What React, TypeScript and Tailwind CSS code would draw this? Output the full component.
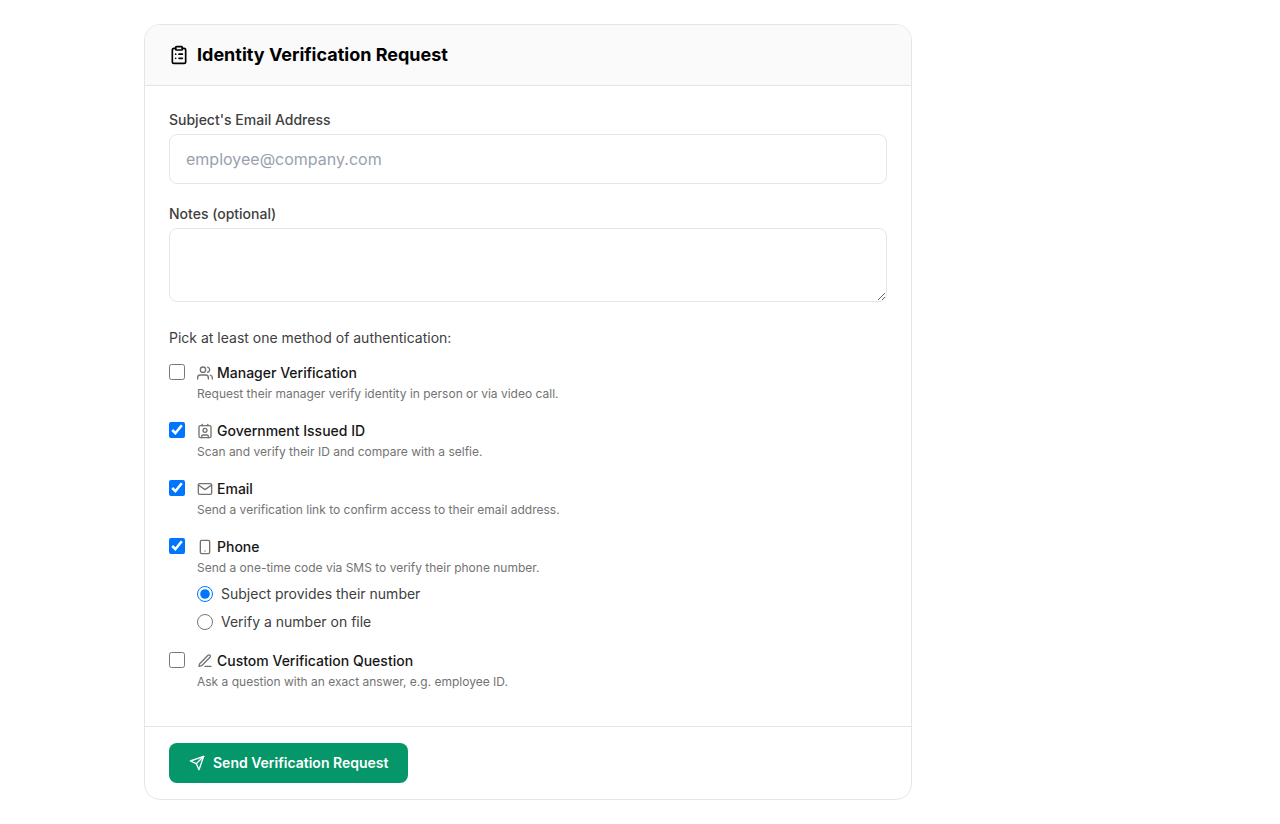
import { useState } from "react";
import type { ReactNode } from "react";
import { ClipboardList, Contact } from "lucide-react";
import { FiEdit3, FiMail, FiSend, FiSmartphone, FiUsers } from "react-icons/fi";

interface MethodProps {
  id: string;
  icon: ReactNode;
  title: string;
  description: string;
  defaultChecked?: boolean;
  children?: ReactNode;
}

function Method({ id, icon, title, description, defaultChecked, children }: MethodProps) {
  return (
    <div className="flex items-start gap-3">
      <input
        id={id}
        type="checkbox"
        defaultChecked={defaultChecked}
        aria-describedby={`${id}-description`}
        className="mt-0.5 size-4 shrink-0 accent-[#0075ff]"
      />
      <div>
        <label htmlFor={id} className="flex items-center gap-1 text-sm leading-[22px] font-medium text-neutral-900">
          <span className="text-neutral-500">{icon}</span>
          {title}
        </label>
        <p id={`${id}-description`} className="text-xs leading-5 text-neutral-500">
          {description}
        </p>
        {children}
      </div>
    </div>
  );
}

export default function App() {
  const [phoneSource, setPhoneSource] = useState("subject");

  return (
    <main className="mx-auto max-w-5xl p-4 pt-6 font-['Inter',sans-serif] text-neutral-700">
      <form
        onSubmit={(e) => e.preventDefault()}
        className="max-w-3xl overflow-hidden rounded-2xl border border-neutral-200 bg-white"
      >
        <header className="flex items-center gap-2 border-b border-neutral-200 bg-neutral-50 px-6 py-4">
          <ClipboardList className="size-5 text-black" />
          <h1 className="text-lg font-bold text-black">Identity Verification Request</h1>
        </header>

        <div className="px-6 pt-6 pb-[34px]">
          <div className="mb-5">
            <label htmlFor="email" className="mb-1 block text-sm font-medium">
              Subject's Email Address
            </label>
            <input
              id="email"
              type="email"
              placeholder="employee@company.com"
              className="block w-full rounded-lg border border-neutral-200 px-4 py-3 text-base placeholder:text-gray-400"
            />
          </div>

          <div className="mb-6">
            <label htmlFor="notes" className="mb-1 block text-sm font-medium">
              Notes (optional)
            </label>
            <textarea
              id="notes"
              rows={2}
              className="block w-full rounded-lg border border-neutral-200 px-4 py-3 text-base"
            />
          </div>

          {/* Authentication methods */}
          <fieldset>
            <legend className="mb-3 text-sm leading-6">Pick at least one method of authentication:</legend>
            <div className="space-y-4">
              <Method
                id="manager"
                icon={<FiUsers className="size-4" />}
                title="Manager Verification"
                description="Request their manager verify identity in person or via video call."
              />
              <Method
                id="government-id"
                icon={<Contact className="size-4" />}
                title="Government Issued ID"
                description="Scan and verify their ID and compare with a selfie."
                defaultChecked
              />
              <Method
                id="email-link"
                icon={<FiMail className="size-4" />}
                title="Email"
                description="Send a verification link to confirm access to their email address."
                defaultChecked
              />
              <Method
                id="phone"
                icon={<FiSmartphone className="size-4" />}
                title="Phone"
                description="Send a one-time code via SMS to verify their phone number."
                defaultChecked
              >
                <div className="mt-1.5 mb-0.5 space-y-2">
                  <label className="flex items-center gap-2 text-sm">
                    <input
                      type="radio"
                      name="phone-source"
                      value="subject"
                      checked={phoneSource === "subject"}
                      onChange={(e) => setPhoneSource(e.target.value)}
                      className="size-4 accent-[#0075ff]"
                    />
                    Subject provides their number
                  </label>
                  <label className="flex items-center gap-2 text-sm">
                    <input
                      type="radio"
                      name="phone-source"
                      value="file"
                      checked={phoneSource === "file"}
                      onChange={(e) => setPhoneSource(e.target.value)}
                      className="size-4 accent-[#0075ff]"
                    />
                    Verify a number on file
                  </label>
                </div>
              </Method>
              <Method
                id="question"
                icon={<FiEdit3 className="size-4" />}
                title="Custom Verification Question"
                description="Ask a question with an exact answer, e.g. employee ID."
              />
            </div>
          </fieldset>
        </div>

        <footer className="border-t border-neutral-200 px-6 py-4">
          <button
            type="submit"
            className="inline-flex items-center gap-2 rounded-lg bg-[#059669] px-5 py-2.5 text-sm font-semibold text-white hover:bg-emerald-700"
          >
            <FiSend className="size-4" />
            Send Verification Request
          </button>
        </footer>
      </form>
    </main>
  );
}
